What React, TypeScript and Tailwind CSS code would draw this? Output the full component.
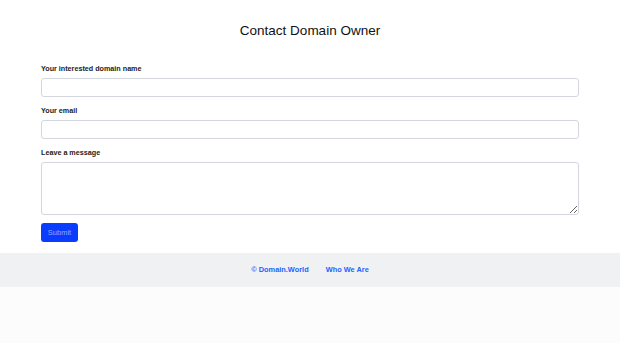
export default function App() {
  return (
    <div className="min-h-[343px] bg-[#fcfcfc] font-['Liberation_Sans',Arial,sans-serif]">
      <main className="bg-white px-[41px] pt-[22px] pb-[11px]">
        <h1 className="text-center text-[13.5px] leading-[18px] text-[#111]">Contact Domain Owner</h1>
        <form className="mt-[24px] flex flex-col" onSubmit={(e) => e.preventDefault()}>
          <label className="text-[7.2px] leading-[10px] font-bold text-[#222]">Your interested domain name</label>
          <input className="mt-[4px] h-[19px] w-full rounded-[3px] border border-[#d3d7dd] bg-white" />
          <label className="mt-[9px] text-[7.2px] leading-[10px] font-bold text-[#222]">Your email</label>
          <input className="mt-[4px] h-[19px] w-full rounded-[3px] border border-[#d3d7dd] bg-white" />
          <label className="mt-[9px] text-[7.2px] leading-[10px] font-bold text-[#222]">Leave a message</label>
          <textarea className="mt-[4px] h-[53px] w-full rounded-[3px] border border-[#d3d7dd] bg-white" />
          <div className="mt-[8px] flex">
            <button className="h-[19px] w-[37px] rounded-[3px] bg-[#0a3cff] text-[7.5px] text-[#8fa9ff]">Submit</button>
          </div>
        </form>
      </main>
      <footer className="flex h-[34px] items-center justify-center gap-[17px] bg-[#f0f1f3] text-[7.4px] font-bold text-[#1e63ff]">
        <span>© Domain.World</span>
        <span>Who We Are</span>
      </footer>
    </div>
  )
}
